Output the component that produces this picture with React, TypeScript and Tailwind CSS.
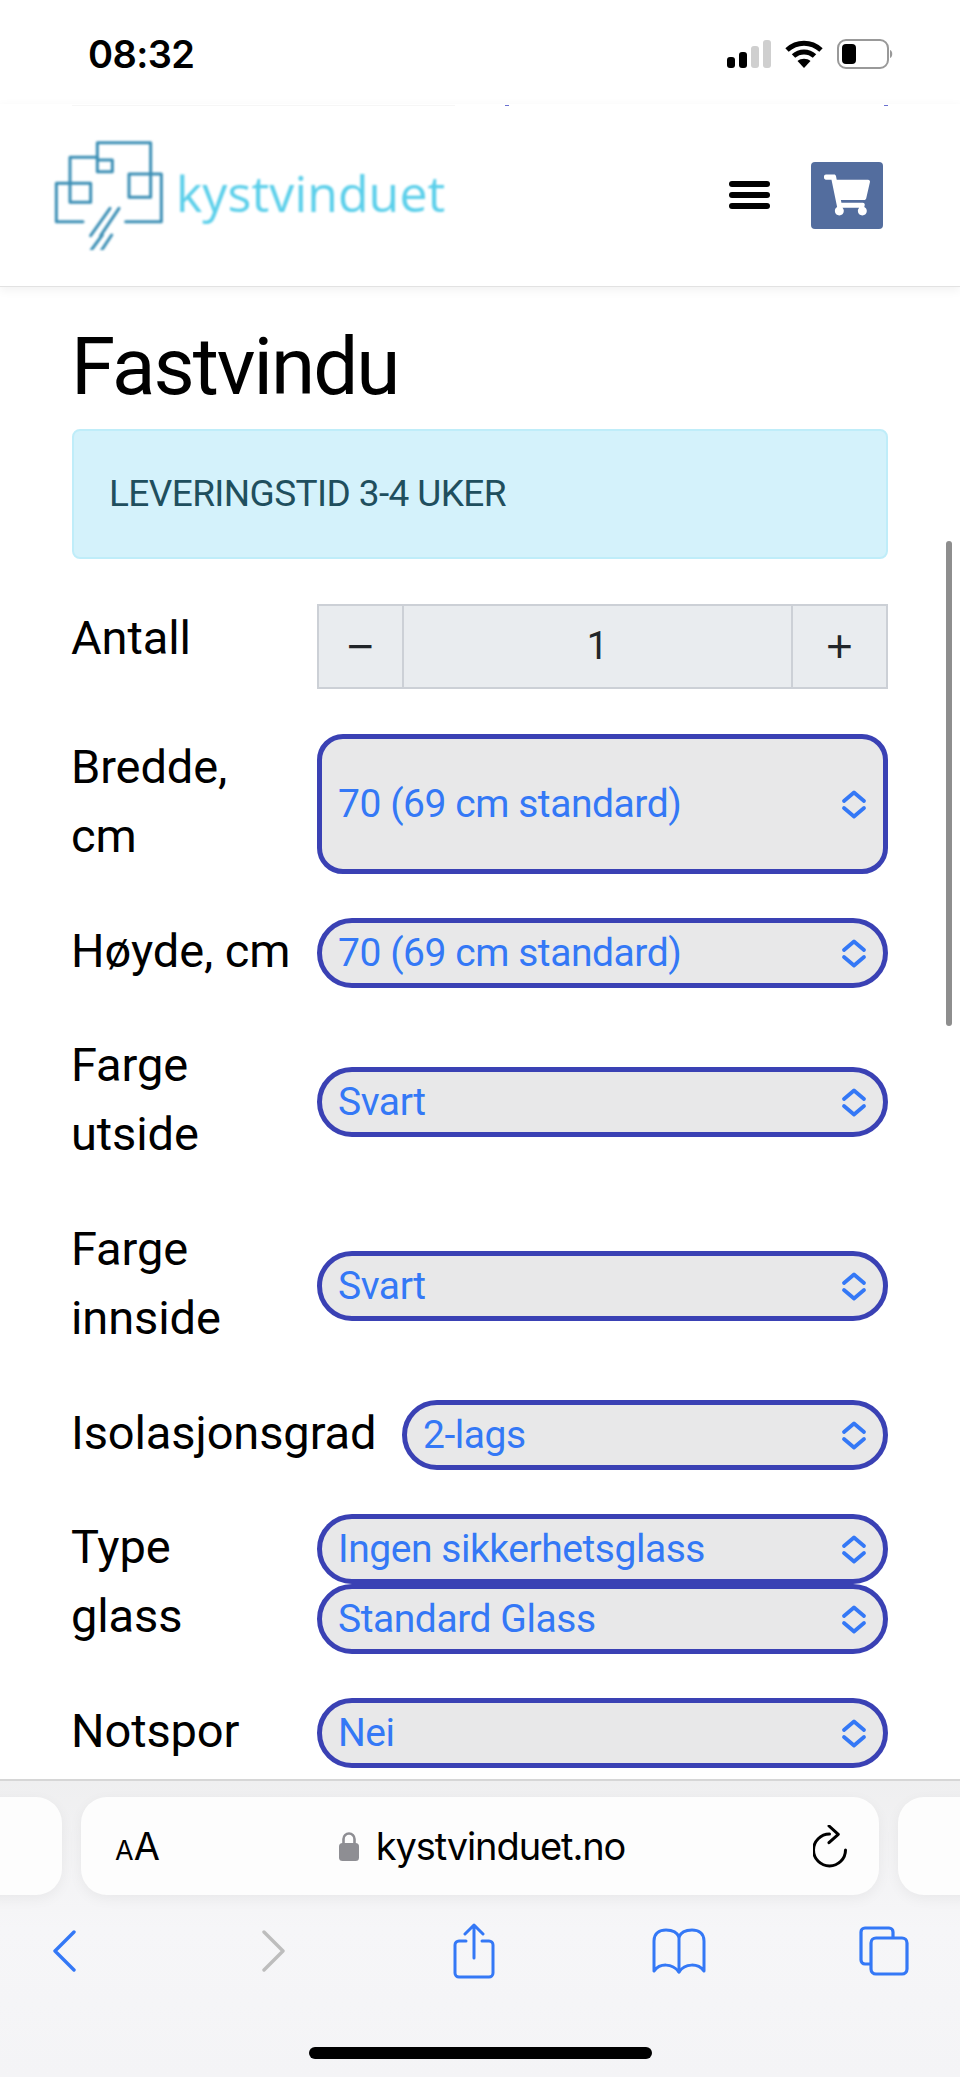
import { FaShoppingCart } from "react-icons/fa";

function Chevrons() {
  return (
    <svg width="26" height="31" viewBox="0 0 26 31" fill="none" stroke="#3478f6" strokeWidth="3.8" strokeLinecap="round" strokeLinejoin="round">
      <path d="M3 12 L13 3.5 L23 12" />
      <path d="M3 19 L13 27.5 L23 19" />
    </svg>
  );
}

function Select({ text, tall }: { text: string; tall?: boolean }) {
  return (
    <div className={`flex w-full items-center justify-between border-[5px] border-[#3a41b4] bg-[#e8e8e9] pl-[16px] pr-[16px] ${tall ? "h-[140px] rounded-[26px]" : "h-[70px] rounded-[35px]"}`}>
      <span className="text-[39px] leading-none tracking-[-0.45px] text-[#3478f6]">{text}</span>
      <Chevrons />
    </div>
  );
}

function Label({ children, className = "" }: { children: React.ReactNode; className?: string }) {
  return <div className={`-ml-[1px] pb-[6px] text-[47px] leading-[69px] tracking-[-0.1px] text-black ${className}`}>{children}</div>;
}

function Logo() {
  return (
    <div className="flex items-center blur-[0.8px]">
      <svg width="132" height="110" viewBox="0 0 396 330" fill="none" stroke="#3c8fb5" strokeWidth="9" strokeLinecap="round" strokeLinejoin="round">
        <path d="M130 60 V8 H290 V172 H225 V102 H322 V245 H215" />
        <path d="M130 60 H175 V95 H130 V52 H48 V187 H110 V130 H7 V245 H87" />
        <path d="M110 287 L168 205" />
        <path d="M140 287 L195 205" />
        <path d="M112 330 L145 285" />
        <path d="M142 332 L173 285" />
      </svg>
      <span className="-mt-[4px] ml-[-10px] text-[50px] font-normal leading-none tracking-[0.1px] text-[#5bcfea] [font-family:'Open_Sans',sans-serif]">kystvinduet</span>
    </div>
  );
}

export default function App() {
  return (
    <div className="relative h-[2077px] w-[960px] overflow-hidden bg-white [font-family:Roboto,sans-serif]">
      {/* status bar */}
      <div className="flex h-[104px] items-start justify-between pt-[33px] pl-[88px] pr-[67px]">
        <span className="text-[38px] font-semibold leading-[42px] tracking-[-0.6px] text-black [font-family:Inter,sans-serif]">08:32</span>
        <div className="flex items-center gap-[14px] pt-[6px]">
          <svg width="44" height="28" viewBox="0 0 44 28">
            <rect x="0" y="17" width="8" height="11" rx="3" fill="#000" />
            <rect x="12" y="12" width="8" height="16" rx="3" fill="#000" />
            <rect x="24" y="6" width="8" height="22" rx="3" fill="#cfcfcf" />
            <rect x="36" y="0" width="8" height="28" rx="3" fill="#cfcfcf" />
          </svg>
          <svg width="38" height="28" viewBox="0 0 38 28" fill="none" stroke="#000" strokeWidth="5">
            <path d="M2 10 C12 1 26 1 36 10" />
            <path d="M8.5 16 C14.5 10.5 23.5 10.5 29.5 16" />
            <path d="M19 28 L12.5 21 C16 18 22 18 25.5 21 Z" fill="#000" stroke="none" />
          </svg>
          <svg width="56" height="30" viewBox="0 0 56 30">
            <rect x="1" y="1" width="50" height="28" rx="8" fill="none" stroke="#999" strokeWidth="2" />
            <rect x="5" y="5" width="14" height="20" rx="4" fill="#000" />
            <path d="M53 11 C56 12 56 18 53 19 Z" fill="#999" />
          </svg>
        </div>
      </div>

      {/* site header */}
      <header className="relative flex h-[183px] items-center justify-between border-b border-[#e2e2e2] bg-white pl-[54px] pr-[77px] shadow-[0_3px_10px_rgba(0,0,0,0.06)]">
        <div className="absolute left-[72px] top-[1px] h-px w-[383px] bg-[#f6f6f6]" />
        <div className="absolute left-[505px] top-[1px] h-px w-[4px] bg-[#6a70d0]" />
        <div className="absolute left-[884px] top-[1px] h-px w-[4px] bg-[#6a70d0]" />
        <Logo />
        <div className="flex items-center gap-[41px]">
          <div className="flex w-[41px] flex-col gap-[5px]">
            <div className="h-[6px] rounded-full bg-black" />
            <div className="h-[6px] rounded-full bg-black" />
            <div className="h-[6px] rounded-full bg-black" />
          </div>
          <div className="flex h-[67px] w-[72px] items-center justify-center rounded-[4px] bg-[#536d9e]">
            <FaShoppingCart className="h-[42px] w-[46px] text-white" />
          </div>
        </div>
      </header>

      {/* content */}
      <main className="pl-[72px] pr-[72px]">
        <h1 className="-ml-[1px] mt-[35px] text-[80px] font-normal leading-[90px] tracking-[-2px] text-black">Fastvindu</h1>
        <div className="mt-[17px] flex h-[130px] items-center rounded-[8px] border-2 border-[#bfedf9] bg-[#d4f2fb] pl-[35px]">
          <span className="text-[37px] tracking-[-0.6px] text-[#1f4f5e]">LEVERINGSTID 3-4 UKER</span>
        </div>

        <div className="mt-[45px] flex flex-col gap-[44px]">
          <div className="flex h-[86px] items-start">
            <Label className="w-[246px] shrink-0 -mt-[1px]">Antall</Label>
            <div className="flex h-[85px] flex-1 border-2 border-[#ccd0d6] bg-[#e9ecef] text-[38px] text-[#212529]">
              <div className="flex w-[85px] items-center justify-center border-r-2 border-[#ccd0d6] text-[46px] [font-family:'Liberation_Sans',sans-serif]">−</div>
              <div className="flex flex-1 items-center justify-center">1</div>
              <div className="flex w-[95px] items-center justify-center border-l-2 border-[#ccd0d6] text-[46px] [font-family:'Liberation_Sans',sans-serif]">+</div>
            </div>
          </div>

          <div className="flex h-[140px] items-center">
            <Label className="w-[246px] shrink-0">Bredde,<br />cm</Label>
            <Select text="70 (69 cm standard)" tall />
          </div>

          <div className="flex h-[70px] items-center">
            <Label className="w-[246px] shrink-0 whitespace-nowrap">Høyde, cm</Label>
            <Select text="70 (69 cm standard)" />
          </div>

          <div className="flex h-[140px] items-center">
            <Label className="w-[246px] shrink-0">Farge<br />utside</Label>
            <Select text="Svart" />
          </div>

          <div className="flex h-[140px] items-center">
            <Label className="w-[246px] shrink-0">Farge<br />innside</Label>
            <Select text="Svart" />
          </div>

          <div className="flex h-[70px] items-center">
            <Label className="w-[331px] shrink-0">Isolasjonsgrad</Label>
            <Select text="2-lags" />
          </div>

          <div className="flex h-[140px] items-center">
            <Label className="w-[246px] shrink-0">Type<br />glass</Label>
            <div className="flex flex-1 flex-col">
              <Select text="Ingen sikkerhetsglass" />
              <Select text="Standard Glass" />
            </div>
          </div>

          <div className="flex h-[70px] items-center">
            <Label className="w-[246px] shrink-0">Notspor</Label>
            <Select text="Nei" />
          </div>
        </div>
      </main>

      {/* page scrollbar */}
      <div className="absolute left-[946px] top-[541px] h-[485px] w-[6px] rounded-full bg-[#8e8e8e]" />

      {/* Safari toolbar */}
      <div className="absolute bottom-0 left-0 h-[298px] w-full border-t-2 border-[#d6d6d6] bg-gradient-to-b from-[#efeff0] via-[#f6f6f8] to-[#f4f4f6]">
        <div className="mt-[16px] flex justify-center gap-[19px]">
          <div className="h-[98px] w-[100px] shrink-0 rounded-[26px] bg-[#fdfdfd] shadow-[0_4px_14px_rgba(0,0,0,0.05)]" />
          <div className="flex h-[98px] w-[798px] shrink-0 items-center justify-between rounded-[26px] bg-[#fdfdfd] pl-[34px] pr-[31px] shadow-[0_4px_14px_rgba(0,0,0,0.05)]">
            <div className="flex w-[45px] items-baseline text-black [font-family:Inter,sans-serif]">
              <span className="text-[27px] leading-none">A</span>
              <span className="text-[38px] leading-none">A</span>
            </div>
            <div className="-ml-[9px] flex items-center gap-[17px]">
              <svg width="20" height="30" viewBox="0 0 20 30">
                <path d="M4.5 13 V8 a5.5 5.5 0 0 1 11 0 V13" fill="none" stroke="#8e8e93" strokeWidth="2.6" />
                <rect x="0" y="12" width="20" height="18" rx="3.5" fill="#8e8e93" />
              </svg>
              <span className="text-[38px] leading-none tracking-[-1.1px] text-black [font-family:Inter,sans-serif]">kystvinduet.no</span>
            </div>
            <svg width="35" height="43" viewBox="0 0 35 43" fill="none" stroke="#000" strokeWidth="3" strokeLinecap="round" strokeLinejoin="round">
              <path d="M16.5 9 A16 16 0 1 0 32.5 25" />
              <path d="M16 1 L25.3 9.3 L16 17.7" />
            </svg>
          </div>
          <div className="h-[98px] w-[100px] shrink-0 rounded-[26px] bg-[#fdfdfd] shadow-[0_4px_14px_rgba(0,0,0,0.05)]" />
        </div>

        <div className="mt-[28px] flex h-[56px] items-center justify-between pl-[34px] pr-[46px]">
          <div className="flex w-[60px] justify-center">
            <svg width="23" height="42" viewBox="0 0 23 42" fill="none" stroke="#3478f6" strokeWidth="3.4" strokeLinecap="round" strokeLinejoin="round">
              <path d="M21 2 L2 21 L21 40" />
            </svg>
          </div>
          <div className="flex w-[60px] justify-center pl-[8px]">
            <svg width="23" height="42" viewBox="0 0 23 42" fill="none" stroke="#bdbdbd" strokeWidth="3.4" strokeLinecap="round" strokeLinejoin="round">
              <path d="M2 2 L21 21 L2 40" />
            </svg>
          </div>
          <div className="flex w-[60px] justify-center">
            <svg width="42" height="56" viewBox="0 0 42 56" fill="none" stroke="#3478f6" strokeWidth="3" strokeLinecap="round" strokeLinejoin="round">
              <path d="M13 18 H6 a4 4 0 0 0 -4 4 V50 a4 4 0 0 0 4 4 H36 a4 4 0 0 0 4 -4 V22 a4 4 0 0 0 -4 -4 H29" />
              <path d="M21 35 V2 M12 11 L21 2 L30 11" />
            </svg>
          </div>
          <div className="flex w-[60px] justify-center">
            <svg width="54" height="46" viewBox="0 0 54 46" fill="none" stroke="#3478f6" strokeWidth="3" strokeLinecap="round" strokeLinejoin="round">
              <path d="M2 43 V13 C2 5 8 2 14 2 C20 2 25 4 27 9 C29 4 34 2 40 2 C46 2 52 5 52 13 V43 C46 35 33 35 27 44 C20 35 8 35 2 43 Z" />
              <path d="M27 9 V44" />
            </svg>
          </div>
          <div className="flex w-[60px] justify-center">
            <svg width="50" height="50" viewBox="0 0 50 50" fill="none" stroke="#3478f6" strokeWidth="3.2" strokeLinejoin="round">
              <path d="M12 38 H6 a4 4 0 0 1 -4 -4 V6 a4 4 0 0 1 4 -4 H30 a4 4 0 0 1 4 4 V12" />
              <rect x="12" y="12" width="36" height="36" rx="5" />
            </svg>
          </div>
        </div>

        <div className="absolute bottom-[18px] left-[309px] h-[12px] w-[343px] rounded-full bg-black" />
      </div>
    </div>
  );
}
